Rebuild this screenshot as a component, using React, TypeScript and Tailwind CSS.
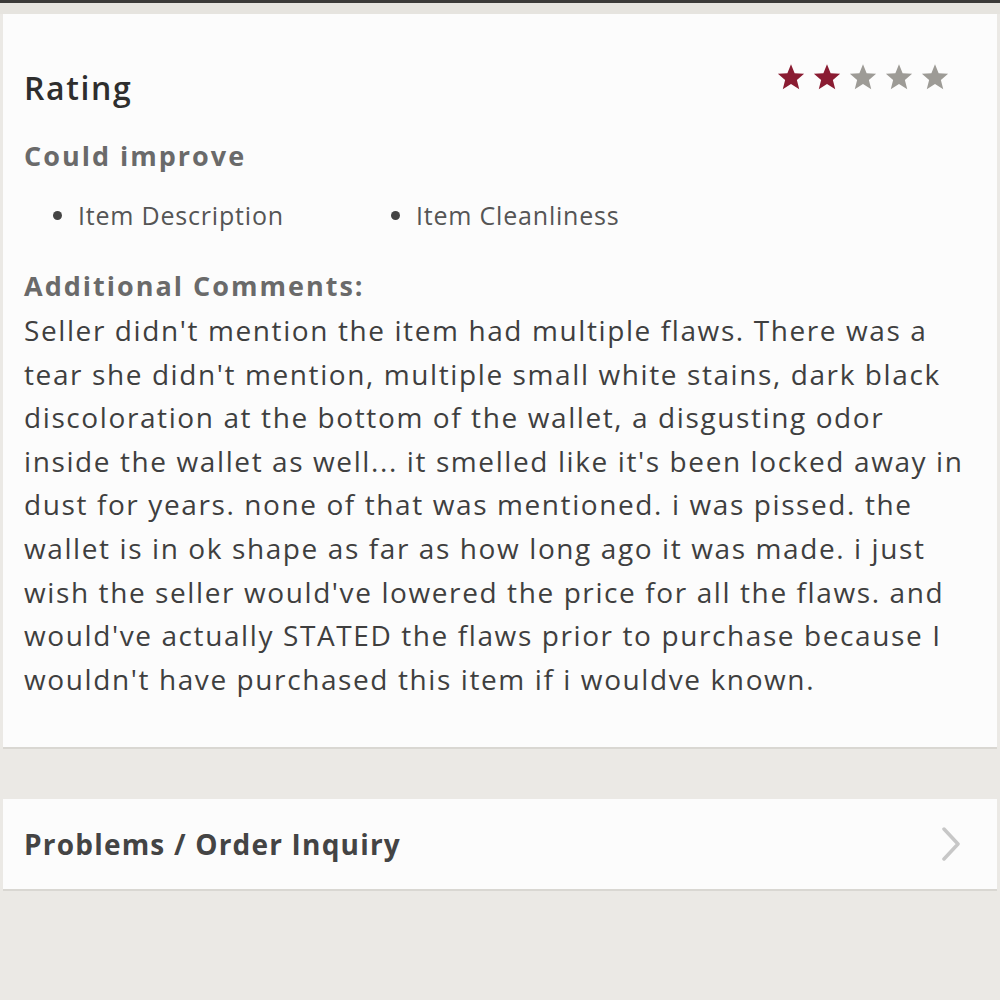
const font = { fontFamily: "'Open Sans', Lato, sans-serif" };

function Star({ filled }: { filled: boolean }) {
  return (
    <svg viewBox="0 0 24 24" className={`h-[30px] w-[30px] ${filled ? "fill-[#8a1c32]" : "fill-[#9d9b96]"}`}>
      <path d="M12 1.8l2.9 7.1 7.6.5-5.8 4.9 1.9 7.4L12 17.6l-6.6 4.1 1.9-7.4-5.8-4.9 7.6-.5z" />
    </svg>
  );
}

const commentLines = [
  "Seller didn't mention the item had multiple flaws. There was a",
  "tear she didn't mention, multiple small white stains, dark black",
  "discoloration at the bottom of the wallet, a disgusting odor",
  "inside the wallet as well... it smelled like it's been locked away in",
  "dust for years. none of that was mentioned. i was pissed. the",
  "wallet is in ok shape as far as how long ago it was made. i just",
  "wish the seller would've lowered the price for all the flaws. and",
  "would've actually STATED the flaws prior to purchase because I",
  "wouldn't have purchased this item if i wouldve known.",
];

export default function App() {
  return (
    <div className="min-h-[1000px] w-[1000px] bg-[#ebe9e5]" style={font}>
      <div className="h-[3px] bg-[#3b3a38]" />
      <div className="h-[11px] bg-[#e6e4df]" />

      <div className="mx-[3px] border-b-2 border-[#d9d7d2] bg-[#fcfcfc] px-[21px] pb-[46px] pt-[50px]">
        <div className="flex items-start justify-between">
          <h1 className="text-[32px] font-semibold leading-[48px] tracking-[1.6px] text-[#2e2e2e]">Rating</h1>
          <div className="mr-[26px] mt-[-2px] flex gap-[6px]">
            <Star filled />
            <Star filled />
            <Star filled={false} />
            <Star filled={false} />
            <Star filled={false} />
          </div>
        </div>

        <h2 className="mt-[24px] text-[27px] font-bold leading-[40px] tracking-[2px] text-[#6a6a6a]">Could improve</h2>

        <ul className="mt-[19px] grid grid-cols-[338px_1fr] pl-[29px] text-[25px] leading-[40px] tracking-[0.8px] text-[#555]">
          <li className="flex items-center gap-[16px]">
            <span className="h-[9px] w-[9px] rounded-full bg-[#444]" />
            Item Description
          </li>
          <li className="flex items-center gap-[16px]">
            <span className="h-[9px] w-[9px] rounded-full bg-[#444]" />
            Item Cleanliness
          </li>
        </ul>

        <h3 className="mt-[31px] text-[27px] font-bold leading-[40px] tracking-[2px] text-[#6a6a6a]">Additional Comments:</h3>
        <p className="mt-[3px] text-[28px] leading-[43.6px] tracking-[1.6px] text-[#3f3f3f]">
          {commentLines.map((line) => (
            <span key={line} className="block whitespace-nowrap">
              {line}
            </span>
          ))}
        </p>
      </div>

      <div className="h-[50px]" />

      <div className="mx-[3px] flex h-[92px] items-center justify-between border-b-2 border-[#d9d7d2] bg-[#fcfcfc] pl-[21px] pr-[36px]">
        <span className="text-[28px] font-bold tracking-[1.2px] text-[#444]">Problems / Order Inquiry</span>
        <svg viewBox="0 0 20 34" className="h-[34px] w-[20px]" fill="none" stroke="#c7c7c7" strokeWidth={3.5} strokeLinecap="round" strokeLinejoin="round">
          <path d="M3 2l14 15L3 32" />
        </svg>
      </div>
    </div>
  );
}
